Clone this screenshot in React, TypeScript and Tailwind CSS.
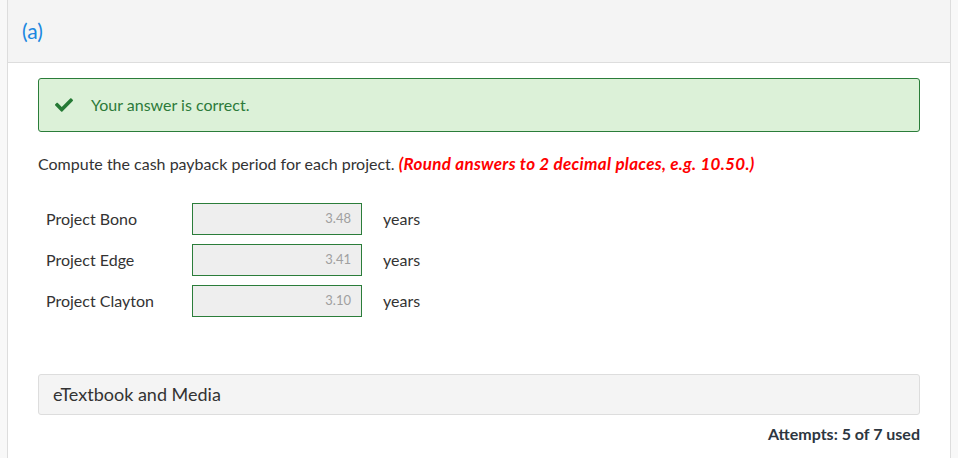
import { FaCheck } from 'react-icons/fa';

const rows = [
    { label: 'Project Bono', value: '3.48' },
    { label: 'Project Edge', value: '3.41' },
    { label: 'Project Clayton', value: '3.10' },
];

export default function App() {
    return (
        <div className="min-h-[458px] w-full bg-[#f8f8f8] pl-[7px] pr-[7px] font-['Lato','Liberation_Sans',sans-serif] text-[#333]">
            <div className="min-h-[458px] border-x border-[#dddddd] bg-white">
                <div className="flex h-[63px] items-center border-b border-[#dddddd] bg-[#f4f4f4] pl-[14px]">
                    <span className="text-[21px] text-[#1a87e0]">(a)</span>
                </div>

                <div className="px-[30px] pt-[15px]">
                    <div className="flex h-[54px] items-center rounded-[3px] border border-[#2b7d3a] bg-[#dcf1d8] pl-[16px]">
                        <FaCheck className="text-[18px] text-[#257a35]" />
                        <span className="ml-[18px] text-[16px] text-[#2c7a3a]">Your answer is correct.</span>
                    </div>

                    <p className="mt-[22px] text-[16px] leading-[20px] text-[#333]">
                        Compute the cash payback period for each project.{' '}
                        <span className="text-[17px] font-bold italic tracking-[0.3px] text-[#ff0000]">(Round answers to 2 decimal places, e.g. 10.50.)</span>
                    </p>

                    <div className="mt-[29px] flex flex-col gap-[9px] pl-[8px]">
                        {rows.map((row) => (
                            <div key={row.label} className="flex items-center">
                                <span className="w-[146px] text-[16px] text-[#333]">{row.label}</span>
                                <div className="flex h-[32px] w-[170px] items-center justify-end border border-[#2b7d3a] bg-[#eeeeee] pr-[10px] text-[13px] text-[#a0a0a0]">
                                    {row.value}
                                </div>
                                <span className="ml-[21px] text-[16px] text-[#333]">years</span>
                            </div>
                        ))}
                    </div>

                    <div className="mt-[57px] flex h-[41px] items-center rounded-[3px] border border-[#dddddd] bg-[#f4f4f4] pl-[14px]">
                        <span className="text-[18px] text-[#333]">eTextbook and Media</span>
                    </div>

                    <div className="mt-[7px] text-right text-[16px] font-bold text-[#2d3640]">Attempts: 5 of 7 used</div>
                </div>
            </div>
        </div>
    );
}
